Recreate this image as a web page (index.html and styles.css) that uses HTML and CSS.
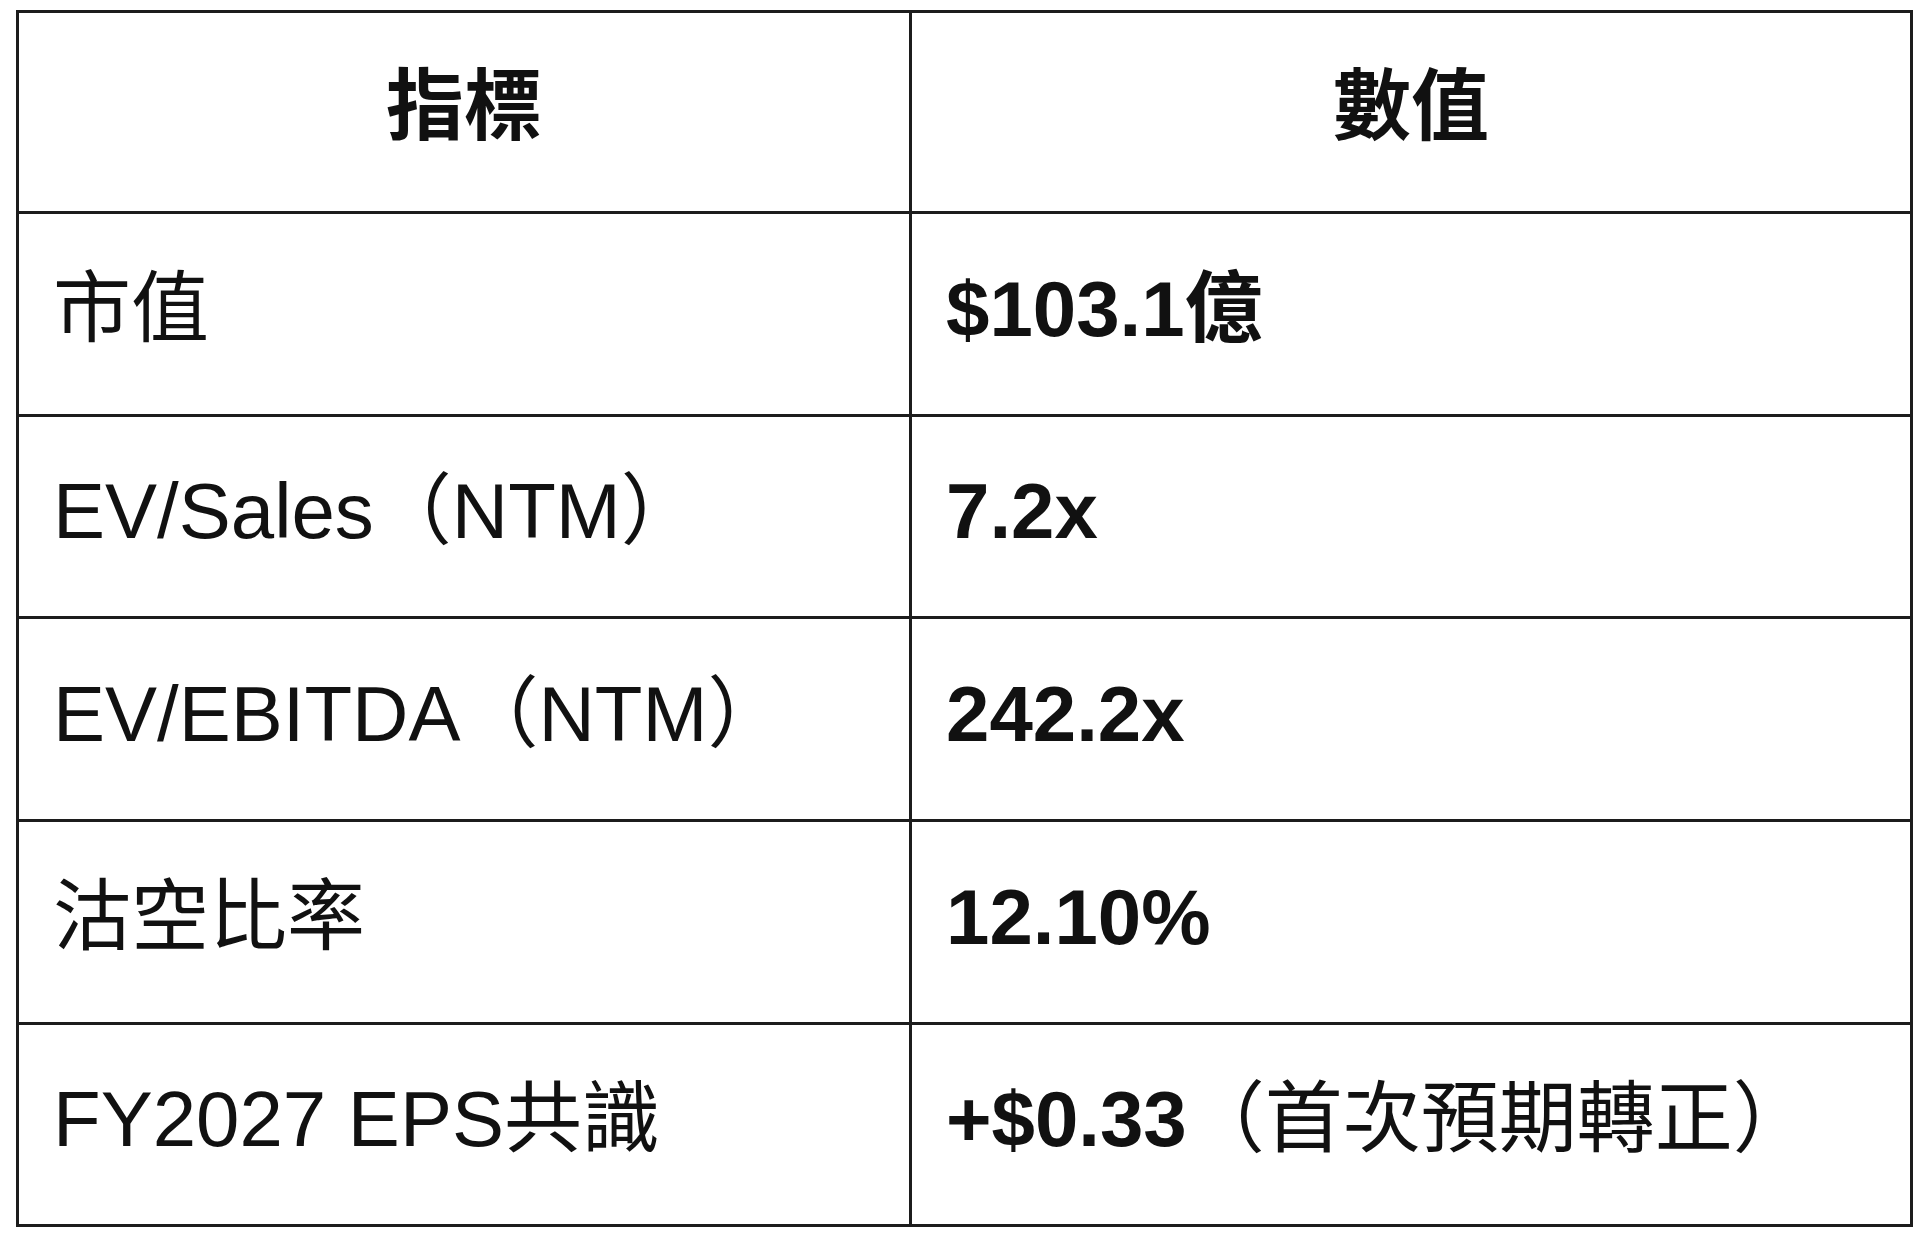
FILE: index.html
```html
<!DOCTYPE html>
<html lang="zh-Hant">
<head>
<meta charset="utf-8">
<title>指標</title>
<link rel="stylesheet" href="styles.css">
</head>
<body>
<div class="page">
  <div class="metrics" role="table">
    <div class="cell head" role="columnheader">指標</div>
    <div class="cell head" role="columnheader">數值</div>

    <div class="cell" role="cell">市值</div>
    <div class="cell val" role="cell">$103.1億</div>

    <div class="cell" role="cell">EV/Sales（NTM）</div>
    <div class="cell val" role="cell">7.2x</div>

    <div class="cell" role="cell">EV/EBITDA（NTM）</div>
    <div class="cell val" role="cell">242.2x</div>

    <div class="cell" role="cell">沽空比率</div>
    <div class="cell val" role="cell">12.10%</div>

    <div class="cell" role="cell">FY2027 EPS共識</div>
    <div class="cell val" role="cell">+$0.33<span class="note">（首次預期轉正）</span></div>
  </div>
</div>
</body>
</html>
```

FILE: styles.css
```css
html, body {
  margin: 0;
  padding: 0;
  background: #ffffff;
}

.page {
  padding: 10px 7px 0 16px;
}

.metrics {
  display: grid;
  grid-template-columns: 893px 1fr;
  grid-template-rows: 201px 203px 202px 203px 203px 202px;
  border-top: 3px solid #1c1c1c;
  border-left: 3px solid #1c1c1c;
  font-family: "Liberation Sans", "Noto Sans CJK TC", sans-serif;
  font-size: 78px;
  color: #111111;
}

.cell {
  box-sizing: border-box;
  border-right: 3px solid #1c1c1c;
  border-bottom: 3px solid #1c1c1c;
  display: flex;
  align-items: center;
  padding: 0 34px 11px 34px;
  white-space: nowrap;
  line-height: 1;
}

.head {
  justify-content: center;
  font-weight: bold;
  padding-left: 0;
  padding-right: 0;
}

.val {
  font-weight: bold;
}

.note {
  font-weight: normal;
}
```
